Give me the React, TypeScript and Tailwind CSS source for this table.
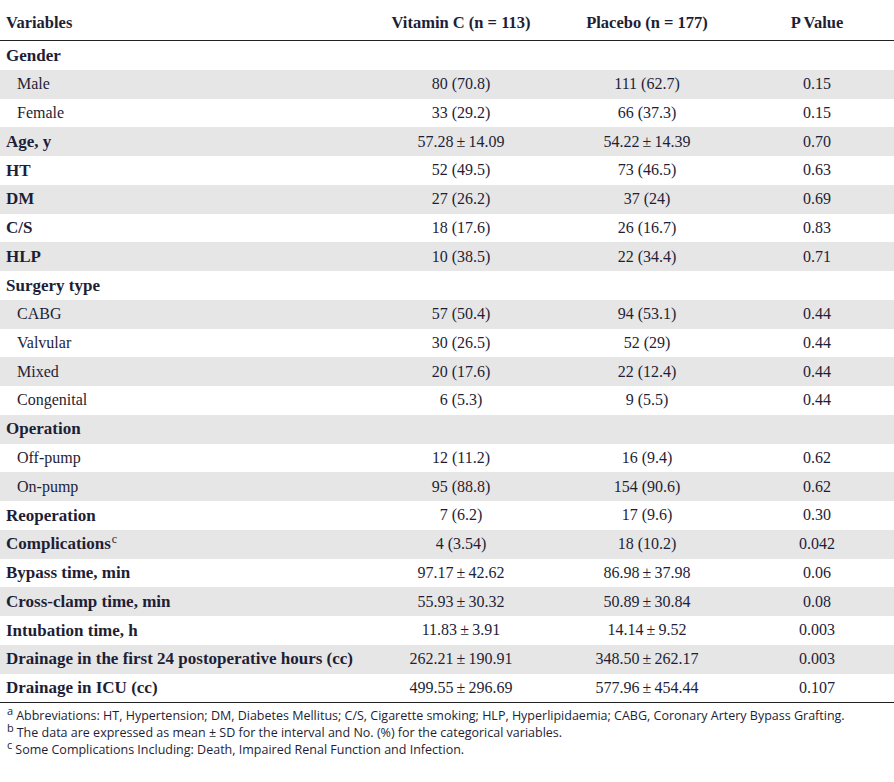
const HEAD = ["Variables", "Vitamin C (n = 113)", "Placebo (n = 177)", "P Value"];

type Row = {
  label: string;
  sub?: boolean;
  sup?: string;
  vc?: string;
  pl?: string;
  p?: string;
};

const pm = (a: string, b: string) => `${a}\u2009±\u2009${b}`;

const ROWS: Row[] = [
  { label: "Gender" },
  { label: "Male", sub: true, vc: "80 (70.8)", pl: "111 (62.7)", p: "0.15" },
  { label: "Female", sub: true, vc: "33 (29.2)", pl: "66 (37.3)", p: "0.15" },
  { label: "Age, y", vc: pm("57.28", "14.09"), pl: pm("54.22", "14.39"), p: "0.70" },
  { label: "HT", vc: "52 (49.5)", pl: "73 (46.5)", p: "0.63" },
  { label: "DM", vc: "27 (26.2)", pl: "37 (24)", p: "0.69" },
  { label: "C/S", vc: "18 (17.6)", pl: "26 (16.7)", p: "0.83" },
  { label: "HLP", vc: "10 (38.5)", pl: "22 (34.4)", p: "0.71" },
  { label: "Surgery type" },
  { label: "CABG", sub: true, vc: "57 (50.4)", pl: "94 (53.1)", p: "0.44" },
  { label: "Valvular", sub: true, vc: "30 (26.5)", pl: "52 (29)", p: "0.44" },
  { label: "Mixed", sub: true, vc: "20 (17.6)", pl: "22 (12.4)", p: "0.44" },
  { label: "Congenital", sub: true, vc: "6 (5.3)", pl: "9 (5.5)", p: "0.44" },
  { label: "Operation" },
  { label: "Off-pump", sub: true, vc: "12 (11.2)", pl: "16 (9.4)", p: "0.62" },
  { label: "On-pump", sub: true, vc: "95 (88.8)", pl: "154 (90.6)", p: "0.62" },
  { label: "Reoperation", vc: "7 (6.2)", pl: "17 (9.6)", p: "0.30" },
  { label: "Complications", sup: "c", vc: "4 (3.54)", pl: "18 (10.2)", p: "0.042" },
  { label: "Bypass time, min", vc: pm("97.17", "42.62"), pl: pm("86.98", "37.98"), p: "0.06" },
  { label: "Cross-clamp time, min", vc: pm("55.93", "30.32"), pl: pm("50.89", "30.84"), p: "0.08" },
  { label: "Intubation time, h", vc: pm("11.83", "3.91"), pl: pm("14.14", "9.52"), p: "0.003" },
  {
    label: "Drainage in the first 24 postoperative hours (cc)",
    vc: pm("262.21", "190.91"),
    pl: pm("348.50", "262.17"),
    p: "0.003",
  },
  { label: "Drainage in ICU (cc)", vc: pm("499.55", "296.69"), pl: pm("577.96", "454.44"), p: "0.107" },
];

const NOTES = [
  {
    mark: "a",
    text: "Abbreviations: HT, Hypertension; DM, Diabetes Mellitus; C/S, Cigarette smoking; HLP, Hyperlipidaemia; CABG, Coronary Artery Bypass Grafting.",
  },
  {
    mark: "b",
    text: "The data are expressed as mean ± SD for the interval and No. (%) for the categorical variables.",
  },
  { mark: "c", text: "Some Complications Including: Death, Impaired Renal Function and Infection." },
];

const COLS = "grid grid-cols-[375px_172px_200px_140px]";

export default function App() {
  return (
    <main className="h-[782px] w-[894px] bg-white text-[#1e1e36]">
      <div className="font-['Liberation_Serif',serif] text-[16px]">
        <div className={`${COLS} h-[41px] items-center border-b-[1.5px] border-[#222] pt-[6px] text-[16.5px] font-bold`}>
          {HEAD.map((h, i) => (
            <div key={h} className={i === 0 ? "pl-[6px]" : "text-center"}>
              {h}
            </div>
          ))}
        </div>

        <div className="border-b-[1.5px] border-[#222]">
          {ROWS.map((r, i) => (
            <div
              key={r.label}
              className={`${COLS} h-[28.75px] items-center ${i % 2 ? "bg-[#e6e6e6]" : "bg-white"}`}
            >
              <div className={r.sub ? "pl-[17px]" : "pl-[6px] text-[17px] font-bold"}>
                {r.label}
                {r.sup && <sup className="ml-[1px] text-[12px] font-normal">{r.sup}</sup>}
              </div>
              <div className="text-center">{r.vc}</div>
              <div className="text-center">{r.pl}</div>
              <div className="text-center">{r.p}</div>
            </div>
          ))}
        </div>
      </div>

      <div className="pt-[4px] pl-[7px] font-['Open_Sans',sans-serif] text-[12.5px] leading-[17px]">
        {NOTES.map((n) => (
          <p key={n.mark}>
            <sup className="mr-[3px] text-[11px]">{n.mark}</sup>
            {n.text}
          </p>
        ))}
      </div>
    </main>
  );
}
